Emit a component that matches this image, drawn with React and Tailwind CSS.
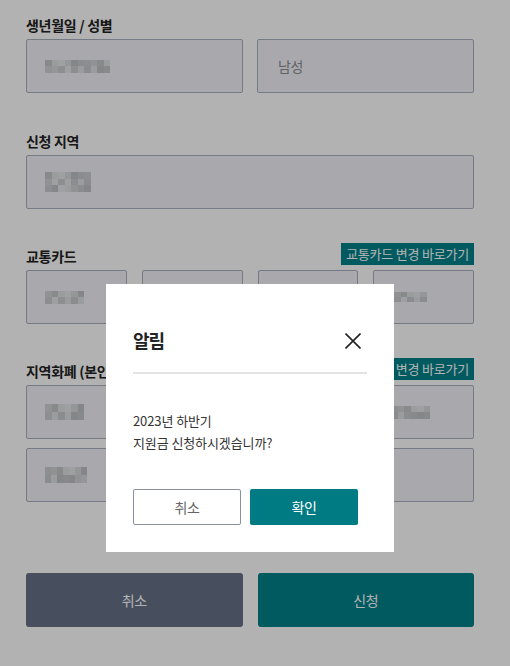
import { useState } from 'react';

const shades = ['bg-[#c3c4c8]', 'bg-[#d6d7da]', 'bg-[#cbccd0]', 'bg-[#dfe0e3]', 'bg-[#bfc0c4]', 'bg-[#d1d2d6]', 'bg-[#e4e5e8]', 'bg-[#c8c9cd]'];

// pixelated (masked) personal data
const Mosaic = ({ cols, rows, seed = 1, size = 'w-[6.5px] h-[6.5px]' }) => (
  <div className="flex flex-col">
    {Array.from({ length: rows }).map((_, r) => (
      <div key={r} className="flex">
        {Array.from({ length: cols }).map((__, c) => (
          <div key={c} className={`${size} ${shades[(c * 3 + r * 5 + seed * 7 + ((c * r + seed) % 3)) % shades.length]}`} />
        ))}
      </div>
    ))}
  </div>
);

const Field = ({ children }) => (
  <div className="flex h-[54px] items-center rounded-[2px] border border-[#a9afbd] bg-[#f2f3f8] pl-[18px] text-[14px] tracking-[-0.5px] text-[#8a8b90]">
    {children}
  </div>
);

const Label = ({ title, link }) => (
  <div className="mb-[4px] flex items-start justify-between">
    <span className="pt-[3px] text-[14px] font-bold leading-[20px] tracking-[-0.3px] text-[#222]">{title}</span>
    {link && (
      <span className="h-[22px] bg-[#00818a] px-[5px] text-[13px] leading-[22px] tracking-[-0.2px] text-white">{link}</span>
    )}
  </div>
);

const App = () => {
  const [open, setOpen] = useState(true);

  return (
    <div className="min-h-screen bg-white font-['Noto_Sans_CJK_KR','Noto_Sans',sans-serif]">
      <div className="w-[474px] pt-[12px] pl-[26px]">
        <section>
          <Label title="생년월일 / 성별" />
          <div className="grid grid-cols-2 gap-x-[14px]">
            <Field><Mosaic cols={10} rows={2} seed={1} /></Field>
            <Field><span className="pl-[2px]">남성</span></Field>
          </div>
        </section>

        <section className="mt-[35px]">
          <Label title="신청 지역" />
          <Field><Mosaic cols={7} rows={3} seed={2} /></Field>
        </section>

        <section className="mt-[34px]">
          <Label title="교통카드" link="교통카드 변경 바로가기" />
          <div className="grid grid-cols-4 gap-x-[15px]">
            <Field><Mosaic cols={6} rows={2} seed={3} /></Field>
            <Field />
            <Field />
            <Field><div className="pl-[2px]"><Mosaic cols={5} rows={2} seed={4} size="w-[6.5px] h-[5px]" /></div></Field>
          </div>
        </section>

        <section className="mt-[34px]">
          <Label title="지역화폐 (본인 명의)" link="지역화폐 변경 바로가기" />
          <div className="grid grid-cols-2 gap-x-[14px] gap-y-[9px]">
            <Field><Mosaic cols={6} rows={2} seed={5} size="w-[6.5px] h-[8px]" /></Field>
            <Field><div className="pl-[115px]"><Mosaic cols={6} rows={2} seed={6} /></div></Field>
            <Field><Mosaic cols={7} rows={2} seed={7} size="w-[6px] h-[8px]" /></Field>
            <Field />
          </div>
        </section>

        <div className="mt-[71px] grid grid-cols-2 gap-x-[15px] pb-[40px]">
          <button type="button" className="h-[54px] rounded-[3px] bg-[#667086] text-[14px] tracking-[-0.5px] text-white">취소</button>
          <button type="button" className="h-[54px] rounded-[3px] bg-[#00818a] text-[14px] tracking-[-0.5px] text-white">신청</button>
        </div>
      </div>

      {open && (
        <div className="fixed inset-0 bg-black/30 pt-[284px] pl-[106px]">
          <div className="w-[288px] bg-white px-[27px] pt-[43px] pb-[27px]">
            <div className="flex h-[26px] items-center justify-between">
              <h2 className="text-[18px] font-bold leading-[26px] tracking-[-1px] text-[#222]">알림</h2>
              <button type="button" onClick={() => setOpen(false)} className="mr-[6px] mt-[2px]">
                <svg width="16" height="16" viewBox="0 0 16 16" fill="none" stroke="#222" strokeWidth="1.6">
                  <path d="M0.5 0.5 L15.5 15.5 M15.5 0.5 L0.5 15.5" />
                </svg>
              </button>
            </div>
            <div className="mt-[19px] h-[2px] bg-[#e3e3e3]" />
            <p className="mt-[36px] text-[13px] leading-[22px] tracking-[-0.1px] text-[#333]">
              2023년 하반기
              <br />
              지원금 신청하시겠습니까?
            </p>
            <div className="mt-[35px] flex gap-[9px]">
              <button type="button" onClick={() => setOpen(false)} className="h-[36px] w-[108px] rounded-[2px] border border-[#8a90a2] bg-white text-[14px] tracking-[-0.5px] text-[#666]">취소</button>
              <button type="button" onClick={() => setOpen(false)} className="h-[36px] w-[108px] rounded-[2px] bg-[#007b83] text-[14px] tracking-[-0.5px] text-white">확인</button>
            </div>
          </div>
        </div>
      )}
    </div>
  );
};

export default App;
